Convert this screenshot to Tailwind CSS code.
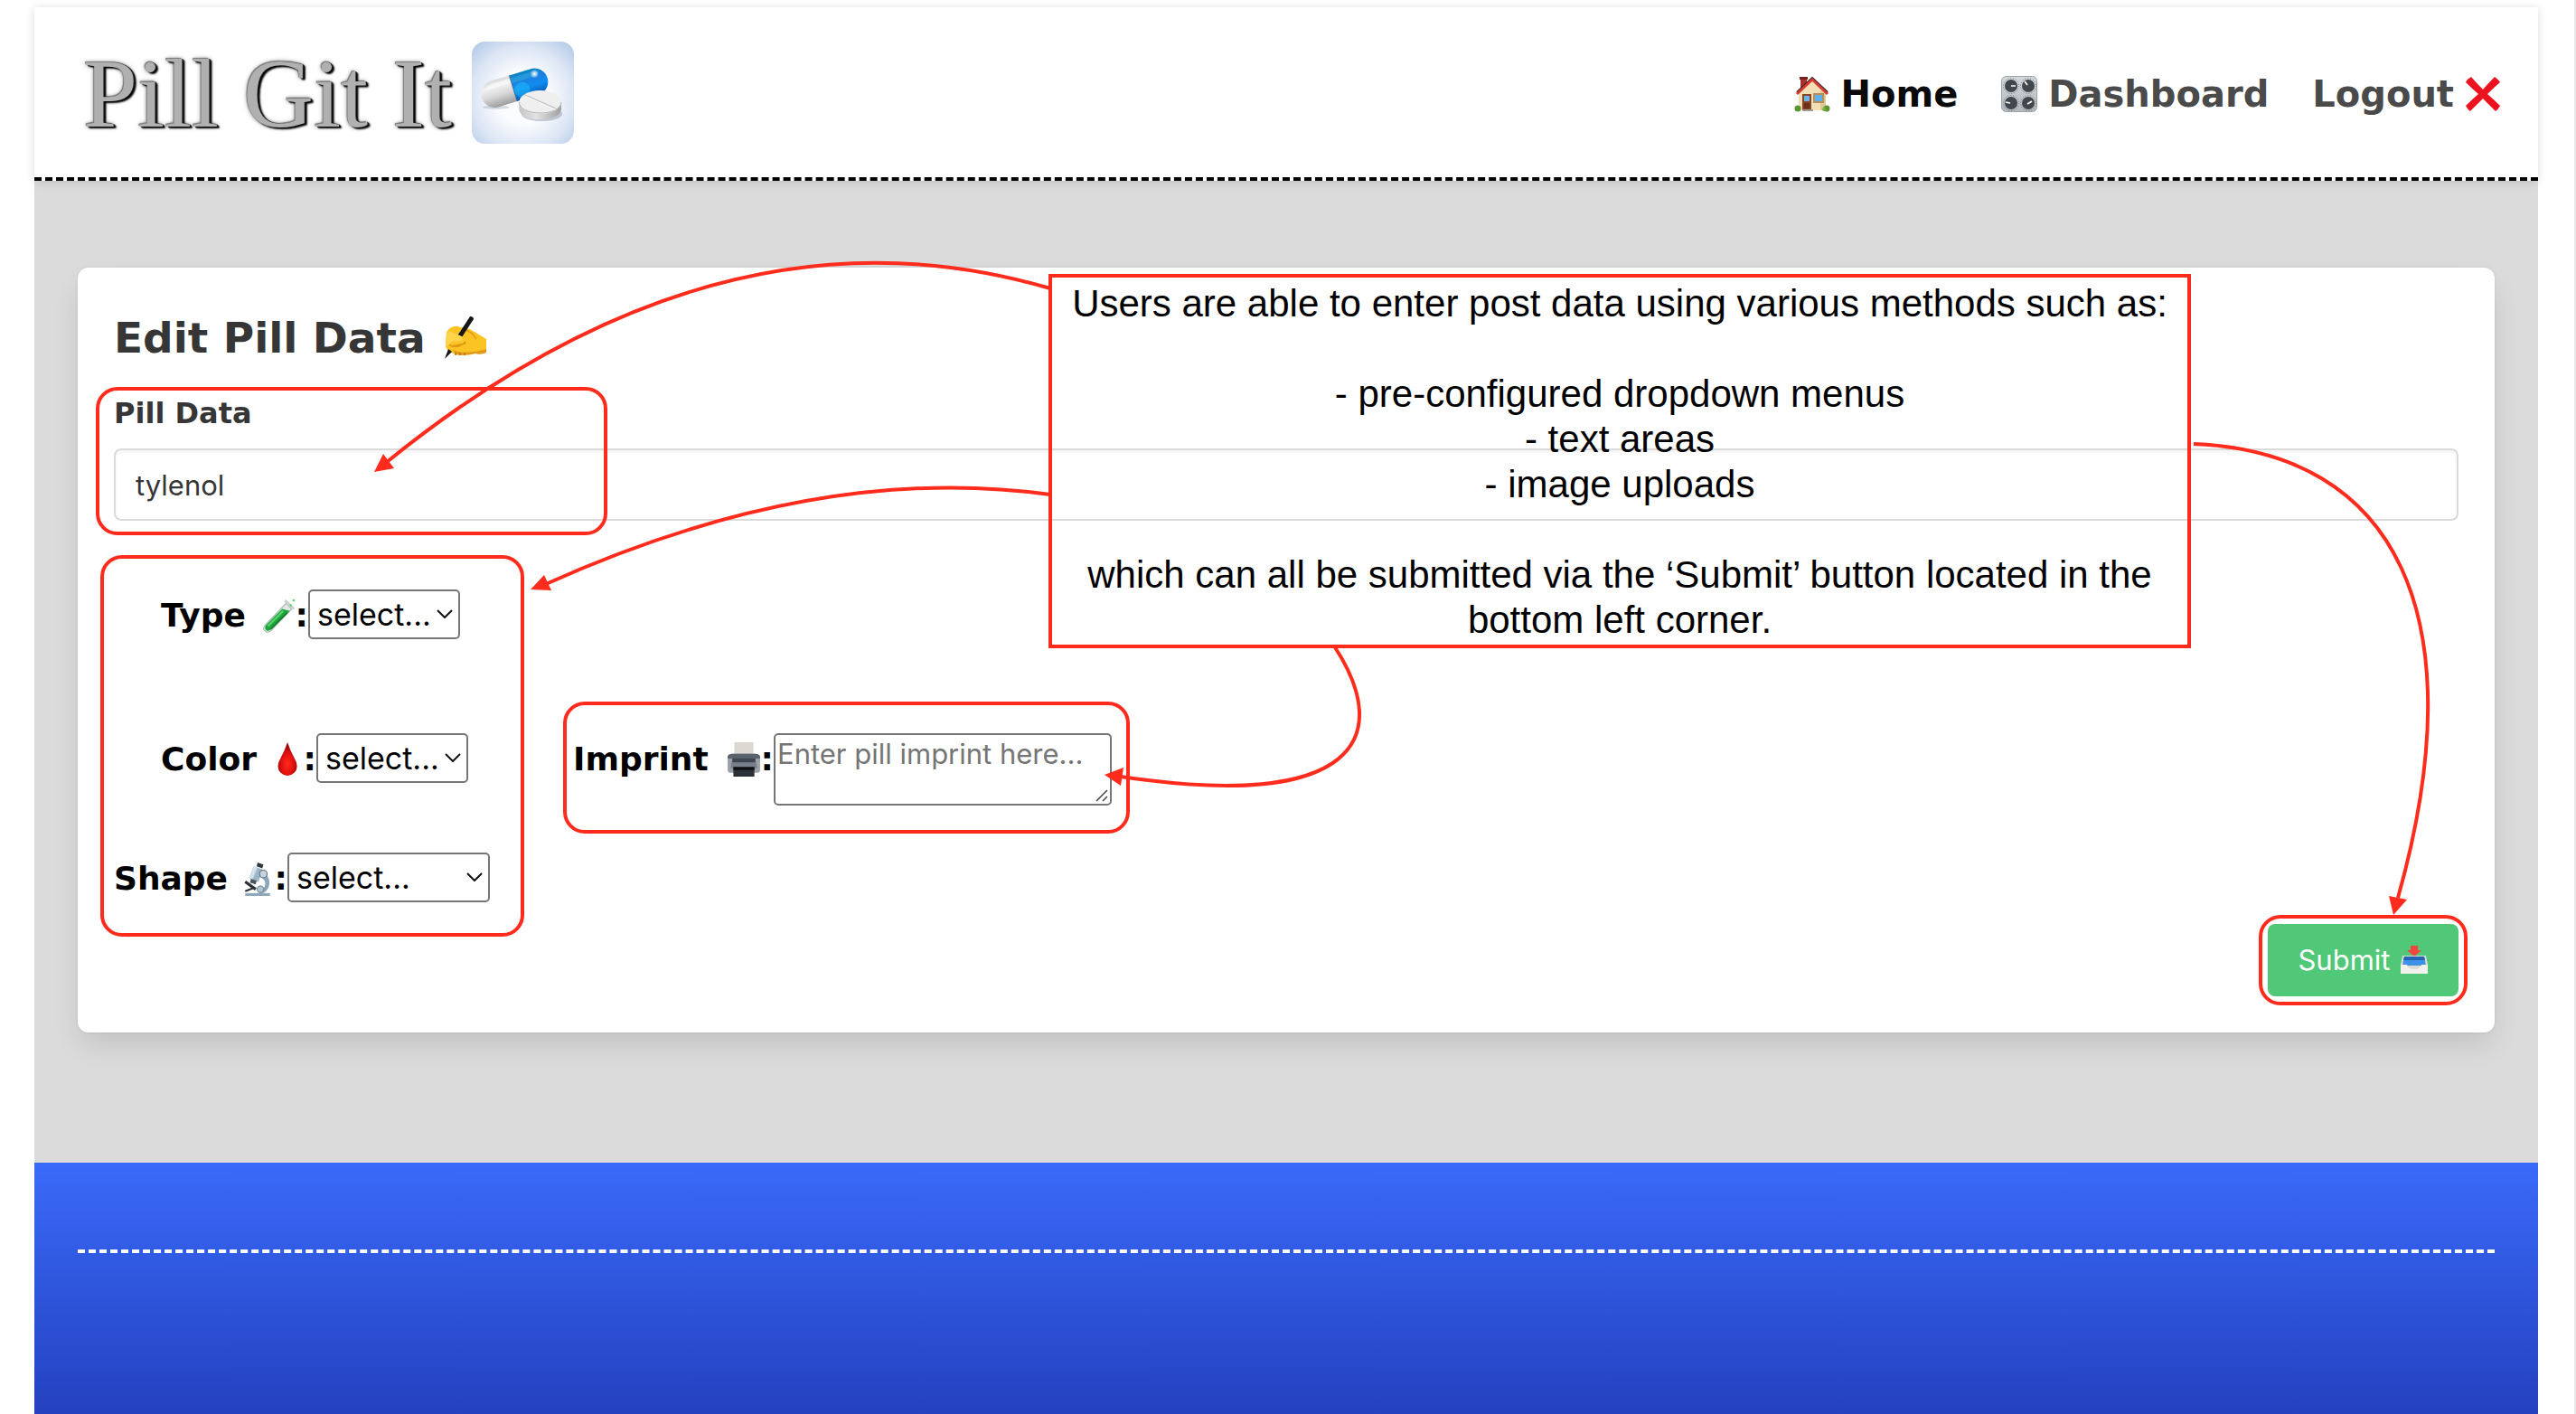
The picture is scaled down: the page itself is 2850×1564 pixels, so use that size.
<!DOCTYPE html>
<html lang="en">
<head>
<meta charset="utf-8">
<meta name="viewport" content="width=device-width, initial-scale=1">
<title>Pill Git It - Edit Pill Data</title>
<script src="https://cdn.jsdelivr.net/npm/@tailwindcss/browser@4"></script>
</head>
<body class="bg-white">
<div class="flex min-h-screen flex-col border-r-2 border-[#e8e8e8] pt-2 pr-10 pl-[38px] font-['Inter',sans-serif] text-black">

  <header class="relative z-10 flex h-48 items-center justify-between border-b-4 border-dashed border-black bg-white pr-[41px] pl-[54px] shadow-[0_1px_10px_rgba(10,10,10,0.14)]">
    <a href="#" class="flex items-center gap-[22px]" aria-label="Pill Git It">
      <span class="pt-1 font-['Liberation_Serif',serif] text-[108px] leading-[112px] whitespace-nowrap text-[#b0b0b0] [text-shadow:1px_0_0_#222,2px_1px_1px_#000,3px_2px_2px_#111,-1px_-1px_1px_#777,0_0_5px_#777]">Pill Git It</span>
      <svg class="size-[113px] shrink-0" viewBox="0 0 339 339">
        <defs>
          <radialGradient id="tile" cx=".5" cy=".55" r=".72"><stop offset=".35" stop-color="#fbfcff"/><stop offset=".7" stop-color="#dbe5f4"/><stop offset="1" stop-color="#b1c8e6"/></radialGradient>
          <linearGradient id="grey" x2="0" y2="1"><stop stop-color="#d9d9d9"/><stop offset=".25" stop-color="#f1f1f1"/><stop offset=".6" stop-color="#d6d6d6"/><stop offset="1" stop-color="#9c9c9c"/></linearGradient>
          <linearGradient id="blue" x2="0" y2="1"><stop stop-color="#0a86c4"/><stop offset=".3" stop-color="#1d7fe0"/><stop offset=".6" stop-color="#0f8df0"/><stop offset="1" stop-color="#0756b0"/></linearGradient>
          <linearGradient id="side"><stop stop-color="#c4c4c4"/><stop offset=".4" stop-color="#e2e2e2"/><stop offset="1" stop-color="#a0a0a0"/></linearGradient>
          <radialGradient id="shine"><stop stop-color="#fff"/><stop offset="1" stop-color="#fff" stop-opacity="0"/></radialGradient>
        </defs>
        <rect width="339" height="339" rx="44" fill="url(#tile)"/>
        <ellipse cx="80" cy="218" rx="44" ry="6" fill="#aab4c4" opacity=".5"/>
        <g transform="rotate(-17 141 154)">
          <path d="M137 109H73a45 45 0 0 0 0 90h64z" fill="url(#grey)"/>
          <path d="M137 109h74a45 45 0 0 1 0 90h-74z" fill="url(#blue)"/>
          <path d="M48 132q8-12 26-13h62v15H66z" fill="#fff" opacity=".5"/>
          <path d="M138 119h74q12 0 20 8l-8 10h-86z" fill="#37b4dd" opacity=".45"/>
          <circle cx="165" cy="168" r="26" fill="#22c5ff" opacity=".45"/>
          <path d="M137 109v90" stroke="#33658f" stroke-width="2"/>
        </g>
        <circle cx="208" cy="107" r="15" fill="url(#shine)"/>
        <ellipse cx="232" cy="240" rx="68" ry="24" fill="#8f9bb0" opacity=".5"/>
        <path d="M157 202v22c0 22 32 34 70 34s70-12 70-34v-22z" fill="url(#side)"/>
        <ellipse cx="227" cy="201" rx="70" ry="39" fill="#efefef"/>
        <path d="M157 201c2 22 30 36 70 36s68-14 70-36" fill="none" stroke="#b4b4b4" stroke-width="3"/>
        <path d="m174 176 105 47" stroke="#c4c4c4" stroke-width="5"/><path d="m176 180 102 46" stroke="#fff" stroke-width="3"/>
      </svg>
    </a>
    <nav class="pt-1 font-['DejaVu_Sans',sans-serif] text-[40px] leading-[48px] font-bold text-[#4a4a4a]">
      <ul class="flex items-center gap-12">
        <li><a href="#" class="flex items-center gap-3 text-[#0a0a0a]">
          <svg class="size-10" viewBox="0 0 40 40">
            <path d="M7 2h7v12H7z" fill="#a5352e"/><path d="M6 1h9v3H6z" fill="#7b221f"/>
            <path d="M5 17 20 4l15 14v20H5z" fill="#f3dfb6"/>
            <path d="M29 16l6 2v20h-6z" fill="#e3c793"/>
            <path d="M3 18 20 2l17 16" fill="none" stroke="#2e2422" stroke-width="2"/><path d="M3 20 20 4l17 16" fill="none" stroke="#d63a31" stroke-width="3"/>
            <path d="M9 20h10v17H9z" fill="#8a4526"/><path d="M11 22h6v6h-6z" fill="#6db4e6"/><path d="M11 30h6v6h-6z" fill="#6f3219"/>
            <path d="M21 19h12v11H21z" fill="#b28e5c"/><path d="M23 21h8v7h-8z" fill="#5fb0ea"/>
            <path d="M9 37h12v2H9z" fill="#9d9d95"/>
            <circle cx="4" cy="36" r="3.5" fill="#5a9632"/><circle cx="36" cy="36" r="3.5" fill="#5a9632"/><circle cx="33" cy="37" r="2" fill="#77b243"/>
          </svg>Home</a></li>
        <li><a href="#" class="flex items-center gap-3">
          <svg class="size-10" viewBox="0 0 40 40">
            <defs><linearGradient id="plate" x2="0" y2="1"><stop stop-color="#d3d8db"/><stop offset="1" stop-color="#b3b8bc"/></linearGradient></defs>
            <rect x=".5" y=".5" width="39" height="39" rx="5" fill="url(#plate)" stroke="#9da3a7"/>
            <g fill="none" stroke="#6c7276" stroke-dasharray="1 2"><circle cx="11" cy="11" r="8.5"/><circle cx="30" cy="11" r="8.5"/><circle cx="11" cy="30" r="8.5"/><circle cx="30" cy="30" r="8.5"/></g>
            <g fill="#41484d"><circle cx="11" cy="11" r="7"/><circle cx="30" cy="11" r="7"/><circle cx="11" cy="30" r="7"/><circle cx="30" cy="30" r="7"/></g>
            <path d="M11 11h5M29 10l-3-4M10 30l-5-1M29 31l5-3" stroke="#fff" stroke-width="1.6"/>
          </svg>Dashboard</a></li>
        <li><a href="#" class="flex items-center gap-3">Logout
          <svg class="size-10" viewBox="0 0 40 40"><path d="M7 1q6 7 13 14Q26 8 33 1q3 2 6 6-7 6-14 13 7 6 14 13-2 4-5 6-7-7-14-14-7 7-14 14-3-2-5-6 7-7 14-13Q8 14 1 7q2-4 6-6z" fill="#ed1220"/></svg></a></li>
      </ul>
    </nav>
  </header>

  <main class="bg-[#dbdbdb] px-12 pt-24 pb-36">
    <section class="relative rounded-xl bg-white p-10 shadow-[0_16px_32px_-4px_rgba(10,10,10,0.12),0_0_0_2px_rgba(10,10,10,0.02)]">
      <form>
        <h1 class="mb-5 flex items-center gap-5 font-['DejaVu_Sans',sans-serif] text-[47px] leading-[76px] font-bold text-[#363636]">Edit Pill Data
          <svg class="size-12" viewBox="0 0 48 48">
            <path d="M3 17Q10 8 18 12q8 0 16 5l13 8v15q-6 2-12 1-10 3-22 1Q3 38 2 33z" fill="#fcc325"/>
            <path d="M20 14q12 2 16 11M4 30q10 8 20-2M8 33l16-3" fill="none" stroke="#e09a12" stroke-width="1.5"/>
            <path d="M10 37q12 6 37-1v4q-6 3-12 1-10 3-22 1z" fill="#e39a18"/>
            <path d="M13 40v3m5-3v3m5-3v3" stroke="#b87412" stroke-width="1.5"/>
            <path d="M29 0q4 0 4 3L18 26l-4-3z" fill="#161616"/><path d="M5 36l4 3-8 8z" fill="#161616"/>
            <path d="M3 18q3-3 7 0l10 4q3 3-1 5-5 1-9 0l-6 6-2-2z" fill="#ffd34a"/>
          </svg>
        </h1>

        <div class="relative">
          <label for="pill" class="mb-[15px] block pt-px font-['DejaVu_Sans',sans-serif] text-[32px] leading-[48px] font-bold text-[#363636]">Pill Data</label>
          <input id="pill" type="text" value="tylenol" class="h-20 w-full rounded-lg border-2 border-[#dbdbdb] bg-transparent px-[22px] text-[31px] text-[#363636] shadow-[inset_0_2px_4px_rgba(10,10,10,0.05)] outline-none">
          <div class="pointer-events-none absolute -top-1 -left-5 h-[164px] w-[566px] rounded-[24px] border-4 border-[#ff2b1c]"></div>
        </div>

        <div class="relative mt-[76px] text-[34px]">
          <div class="pointer-events-none absolute -top-[38px] -left-[15px] h-[422px] w-[469px] rounded-[24px] border-4 border-[#ff2b1c]"></div>

          <div class="ml-[52px] flex items-center">
            <label for="type" class="flex w-[163px] items-center pt-0.5 font-['DejaVu_Sans',sans-serif] text-4xl leading-[53px] font-bold"><span class="mr-auto">Type</span>
              <svg class="size-[38px]" viewBox="0 0 36 36">
                <path d="M4 28 26 5l6 6L11 33q-4 4-7 1-3-2 0-6z" fill="#dfe9e4" stroke="#a5b5ad"/>
                <path d="M5 28 22 11l8 2-19 19q-4 3-6 1-2-2 0-5z" fill="#1fa53b"/><path d="M7 29 23 13" stroke="#59d66b" stroke-width="2"/><path d="m10 32 17-17" stroke="#0e7a28" stroke-width="1.5"/>
                <path d="m25 2 9 9" stroke="#c9d2ce" stroke-width="3"/><circle cx="34" cy="2" r="1.4" fill="#68d67a"/><circle cx="31" cy="7" r="1.2" fill="#68d67a"/>
              </svg><span>:</span></label>
            <div class="relative">
              <select id="type" class="block h-[55px] w-[168px] appearance-none rounded-[5px] border-2 border-[#767676] bg-white pl-2 text-black"><option>select...</option></select>
              <svg class="pointer-events-none absolute top-[22px] right-2 h-[10px] w-[18px]" viewBox="0 0 18 10" fill="none" stroke="#111" stroke-width="2"><path d="m1 1 8 8 8-8"/></svg>
            </div>
          </div>

          <div class="mt-[104px] flex items-start">
            <div class="ml-[52px] flex items-center">
              <label for="color" class="flex w-[172px] items-center pt-0.5 font-['DejaVu_Sans',sans-serif] text-4xl leading-[53px] font-bold"><span class="mr-auto">Color</span>
                <svg class="size-[38px]" viewBox="0 0 36 36">
                  <defs><radialGradient id="blood" cx=".5" cy=".65" r=".55"><stop stop-color="#ff2a1c"/><stop offset=".6" stop-color="#e01010"/><stop offset="1" stop-color="#98060b"/></radialGradient></defs>
                  <path d="M19 0q3 9 7 16 3 5 3 9a10 10 0 0 1-20 0q0-4 3-9 4-7 7-16z" fill="url(#blood)"/>
                </svg><span>:</span></label>
              <div class="relative">
                <select id="color" class="block h-[55px] w-[168px] appearance-none rounded-[5px] border-2 border-[#767676] bg-white pl-2 text-black"><option>select...</option></select>
                <svg class="pointer-events-none absolute top-[22px] right-2 h-[10px] w-[18px]" viewBox="0 0 18 10" fill="none" stroke="#111" stroke-width="2"><path d="m1 1 8 8 8-8"/></svg>
              </div>
            </div>
            <div class="relative ml-[116px] flex items-start">
              <label for="imprint" class="flex w-[222px] items-center pt-0.5 font-['DejaVu_Sans',sans-serif] text-4xl leading-[53px] font-bold"><span class="mr-auto">Imprint</span>
                <svg class="size-[38px]" viewBox="0 0 36 36">
                  <path d="M8 0h20v14H8z" fill="#dcd9d2"/>
                  <path d="M1 15q1-3 5-3h24q4 0 5 3v14q0 3-3 3H4q-3 0-3-3z" fill="#9ba1a8"/>
                  <path d="M1 15q1-3 5-3h24q4 0 5 3v2H1z" fill="#5a626c"/><path d="M6 17h24l2 10H4z" fill="#77808a"/><path d="M6 17h24v4H6z" fill="#3e4650"/>
                  <path d="M7 26h22v10H7z" fill="#2c3138"/><path d="M7 26h22v3H7z" fill="#0d0f12"/>
                </svg><span>:</span></label>
              <div class="relative h-20">
                <textarea id="imprint" placeholder="Enter pill imprint here..." class="block h-20 w-[374px] resize-none rounded-[5px] border-2 border-[#767676] bg-white px-0.5 text-[31px] leading-[42px] placeholder:text-[#757575]"></textarea>
                <svg class="pointer-events-none absolute right-1 bottom-1 size-[14px]" viewBox="0 0 14 14" stroke="#444" stroke-width="1.5"><path d="M1 13 13 1M8 13l5-5"/></svg>
              </div>
              <div class="pointer-events-none absolute -top-[35px] -left-[11px] h-[146px] w-[627px] rounded-[24px] border-4 border-[#ff2b1c]"></div>
            </div>
          </div>

          <div class="mt-[52px] flex items-center">
            <label for="shape" class="flex w-[192px] items-center pt-0.5 font-['DejaVu_Sans',sans-serif] text-4xl leading-[53px] font-bold"><span class="mr-auto">Shape</span>
              <svg class="size-[38px]" viewBox="0 0 36 36">
                <path d="M18 1l6 2-1 4-6-2z" fill="#30363d"/><path d="M14 5l9 3-4 13-10-4z" fill="#9db6ca"/><path d="M14 5l4 1-5 12-4-1z" fill="#d3e2ec"/>
                <path d="M11 18l6 2-1 4-6-2z" fill="#4a5560"/><path d="M22 11q10 4 8 14-1 5-6 8h-5q7-4 7-10 0-5-6-7z" fill="#8ba6ba"/>
                <circle cx="24" cy="13" r="4" fill="#c7d3dc" stroke="#5d6f7d"/><path d="m5 21 11 8" stroke="#2c3238" stroke-width="3"/><path d="m5 31 8-3" stroke="#2c3238" stroke-width="2"/>
                <circle cx="21" cy="29" r="3.5" fill="#b1c3d0" stroke="#6d8393"/><path d="M5 33h26v3H5z" fill="#8fa9bc"/>
              </svg><span>:</span></label>
            <div class="relative">
              <select id="shape" class="block h-[55px] w-[224px] appearance-none rounded-[5px] border-2 border-[#767676] bg-white pl-2 text-black"><option>select...</option></select>
              <svg class="pointer-events-none absolute top-[22px] right-2 h-[10px] w-[18px]" viewBox="0 0 18 10" fill="none" stroke="#111" stroke-width="2"><path d="m1 1 8 8 8-8"/></svg>
            </div>
          </div>
        </div>

        <div class="mt-6 flex justify-end">
          <div class="relative">
            <button type="button" class="flex h-20 w-[211px] items-center justify-center gap-[10px] rounded-lg bg-[#50c878] text-[31px] text-white">Submit
              <svg class="size-8" viewBox="0 0 32 32">
                <path d="M12 0h8v5h4l-8 7-8-7h4z" fill="#f4463f"/>
                <path d="M3 11h26l2 10v10H1V21z" fill="#dcdad6"/><path d="M5 12h22l2 10H3z" fill="#3b92e6"/><path d="M5 12h22l1 4H4z" fill="#2467b0"/>
                <path d="M1 21h7q1 5 8 5t8-5h7v10H1z" fill="#f3f1ee"/>
              </svg>
            </button>
            <div class="pointer-events-none absolute -inset-x-[10px] -inset-y-[10px] rounded-[24px] border-4 border-[#ff2b1c]"></div>
          </div>
        </div>
      </form>

      <!-- Callout note and its arrows, laid over the form -->
      <div class="pointer-events-none absolute top-[7px] left-[1074px] h-[414px] w-[1264px] border-4 border-[#ff2b1c] pt-1 text-center font-['Liberation_Sans',Arial,sans-serif] text-[42px] leading-[50px]">
        <p>Users are able to enter post data using various methods such as:</p>
        <ul class="my-[50px]"><li>- pre-configured dropdown menus</li><li>- text areas</li><li>- image uploads</li></ul>
        <p>which can all be submitted via the ‘Submit’ button located in the<br>bottom left corner.</p>
      </div>
      <svg class="pointer-events-none absolute top-0 left-0 h-[846px] w-[2674px] overflow-visible" viewBox="86 296 2674 846">
        <g fill="none" stroke="#ff2b1c" stroke-width="4">
          <path d="M1162 319Q797 212 428 511"/>
          <path d="M1162 547Q904 511 604 646"/>
          <path d="M1477 716C1542 816 1500 898 1240 859"/>
          <path d="M2427 491C2650 500 2741 680 2653 993"/>
        </g>
        <path d="M414 522 424 502 436 518zM587 652 602 636 610 653zM1222 857 1243 849 1240 869zM2648 1012 2643 991 2663 995z" fill="#ff2b1c"/>
      </svg>
    </section>
  </main>

  <footer class="min-h-[278px] flex-1 bg-linear-to-b from-[#3a6af9] to-[#2441c0] px-12 pt-24">
    <div class="border-t-4 border-dashed border-[#fafafa]"></div>
  </footer>
</div>
</body>
</html>
